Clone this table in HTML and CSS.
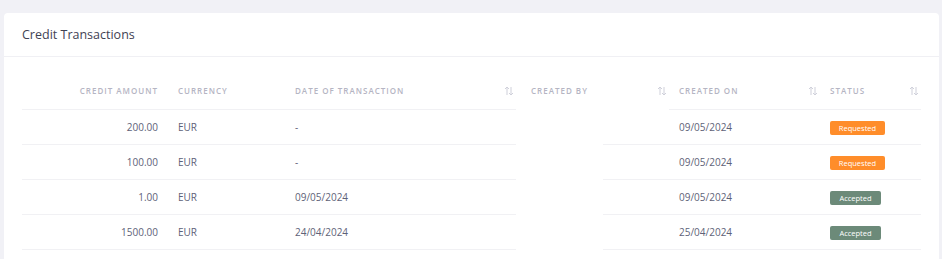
FILE: index.html
```html
<!DOCTYPE html>
<html>
<head>
    <title>Credit Transactions</title>
    <meta charset="utf-8">
    <link rel="stylesheet" href="styles.css">
</head>
<body>
    <div class="card">
        <div class="card-header">Credit Transactions</div>
        <div class="card-body">
            <table class="tx-table">
                <thead>
                    <tr>
                        <th class="col-amount">Credit Amount</th>
                        <th class="col-currency">Currency</th>
                        <th class="col-date sortable">Date of Transaction
                            <svg class="sort" viewBox="0 0 10 10"><path d="M3 9V1M1 3l2-2 2 2M7 1v8M5 7l2 2 2-2"/></svg>
                        </th>
                        <th class="col-by sortable">Created By
                            <svg class="sort" viewBox="0 0 10 10"><path d="M3 9V1M1 3l2-2 2 2M7 1v8M5 7l2 2 2-2"/></svg>
                        </th>
                        <th class="col-on sortable">Created On
                            <svg class="sort" viewBox="0 0 10 10"><path d="M3 9V1M1 3l2-2 2 2M7 1v8M5 7l2 2 2-2"/></svg>
                        </th>
                        <th class="col-status sortable">Status
                            <svg class="sort" viewBox="0 0 10 10"><path d="M3 9V1M1 3l2-2 2 2M7 1v8M5 7l2 2 2-2"/></svg>
                        </th>
                    </tr>
                </thead>
                <tbody>
                    <tr>
                        <td class="col-amount">200.00</td>
                        <td>EUR</td>
                        <td>-</td>
                        <td class="empty"></td>
                        <td>09/05/2024</td>
                        <td><span class="badge requested">Requested</span></td>
                    </tr>
                    <tr>
                        <td class="col-amount">100.00</td>
                        <td>EUR</td>
                        <td>-</td>
                        <td class="empty"></td>
                        <td>09/05/2024</td>
                        <td><span class="badge requested">Requested</span></td>
                    </tr>
                    <tr>
                        <td class="col-amount">1.00</td>
                        <td>EUR</td>
                        <td>09/05/2024</td>
                        <td class="empty"></td>
                        <td>09/05/2024</td>
                        <td><span class="badge accepted">Accepted</span></td>
                    </tr>
                    <tr>
                        <td class="col-amount">1500.00</td>
                        <td>EUR</td>
                        <td>24/04/2024</td>
                        <td class="empty"></td>
                        <td>25/04/2024</td>
                        <td><span class="badge accepted">Accepted</span></td>
                    </tr>
                </tbody>
            </table>
        </div>
    </div>
</body>
</html>
```

FILE: styles.css
```css
body {
    background-color: #f1f1f6;
    margin: 0;
    padding: 13px 3px 0 4px;
    font-family: "Open Sans", sans-serif;
}
.card {
    background-color: #ffffff;
    border-radius: 4px 4px 0 0;
    height: 260px;
}
.card-header {
    height: 43px;
    padding: 0 18px;
    display: flex;
    align-items: center;
    border-bottom: 1px solid #f0f0f4;
    font-size: 12.5px;
    font-weight: 500;
    color: #3f4254;
}
.card-body {
    padding: 17px 17px 0 18px;
}
.tx-table {
    width: 899px;
    border-collapse: separate;
    border-spacing: 0;
    table-layout: fixed;
}
.tx-table th,
.tx-table td {
    box-sizing: border-box;
    height: 35px;
    padding: 0 10px;
    border-bottom: 1px solid #f1f1f4;
    vertical-align: middle;
}
.tx-table th {
    height: 36px;
    padding-bottom: 3px;
    text-align: left;
    font-size: 8px;
    font-weight: 600;
    letter-spacing: 1px;
    text-transform: uppercase;
    color: #b5b5c3;
    white-space: nowrap;
}
.tx-table td {
    font-size: 10px;
    color: #5e6278;
}
.tx-table th.col-by {
    padding-left: 15px;
    border-bottom: none;
}
/* the created-by cells only keep the tail of the row line */
.tx-table td.empty {
    border-bottom: none;
    background: linear-gradient(#f1f1f4, #f1f1f4) no-repeat right bottom / 66px 1px;
}
.col-amount { width: 146px; text-align: right !important; }
.col-currency { width: 117px; }
.col-date { width: 231px; }
.col-by { width: 153px; }
.col-on { width: 151px; }
.col-status { width: 101px; }
.sortable { position: relative; }
.sort {
    position: absolute;
    right: 2px;
    top: 12px;
    width: 10px;
    height: 10px;
    fill: none;
    stroke: #cfd0da;
    stroke-width: 1;
}
.badge {
    display: inline-block;
    box-sizing: border-box;
    height: 14px;
    line-height: 14px;
    border-radius: 2px;
    font-size: 7.5px;
    font-weight: 500;
    text-align: center;
    color: #ffffff;
}
.requested {
    background-color: #ff8d2a;
    width: 55px;
}
.accepted {
    background-color: #6c8a79;
    width: 51px;
}
```
